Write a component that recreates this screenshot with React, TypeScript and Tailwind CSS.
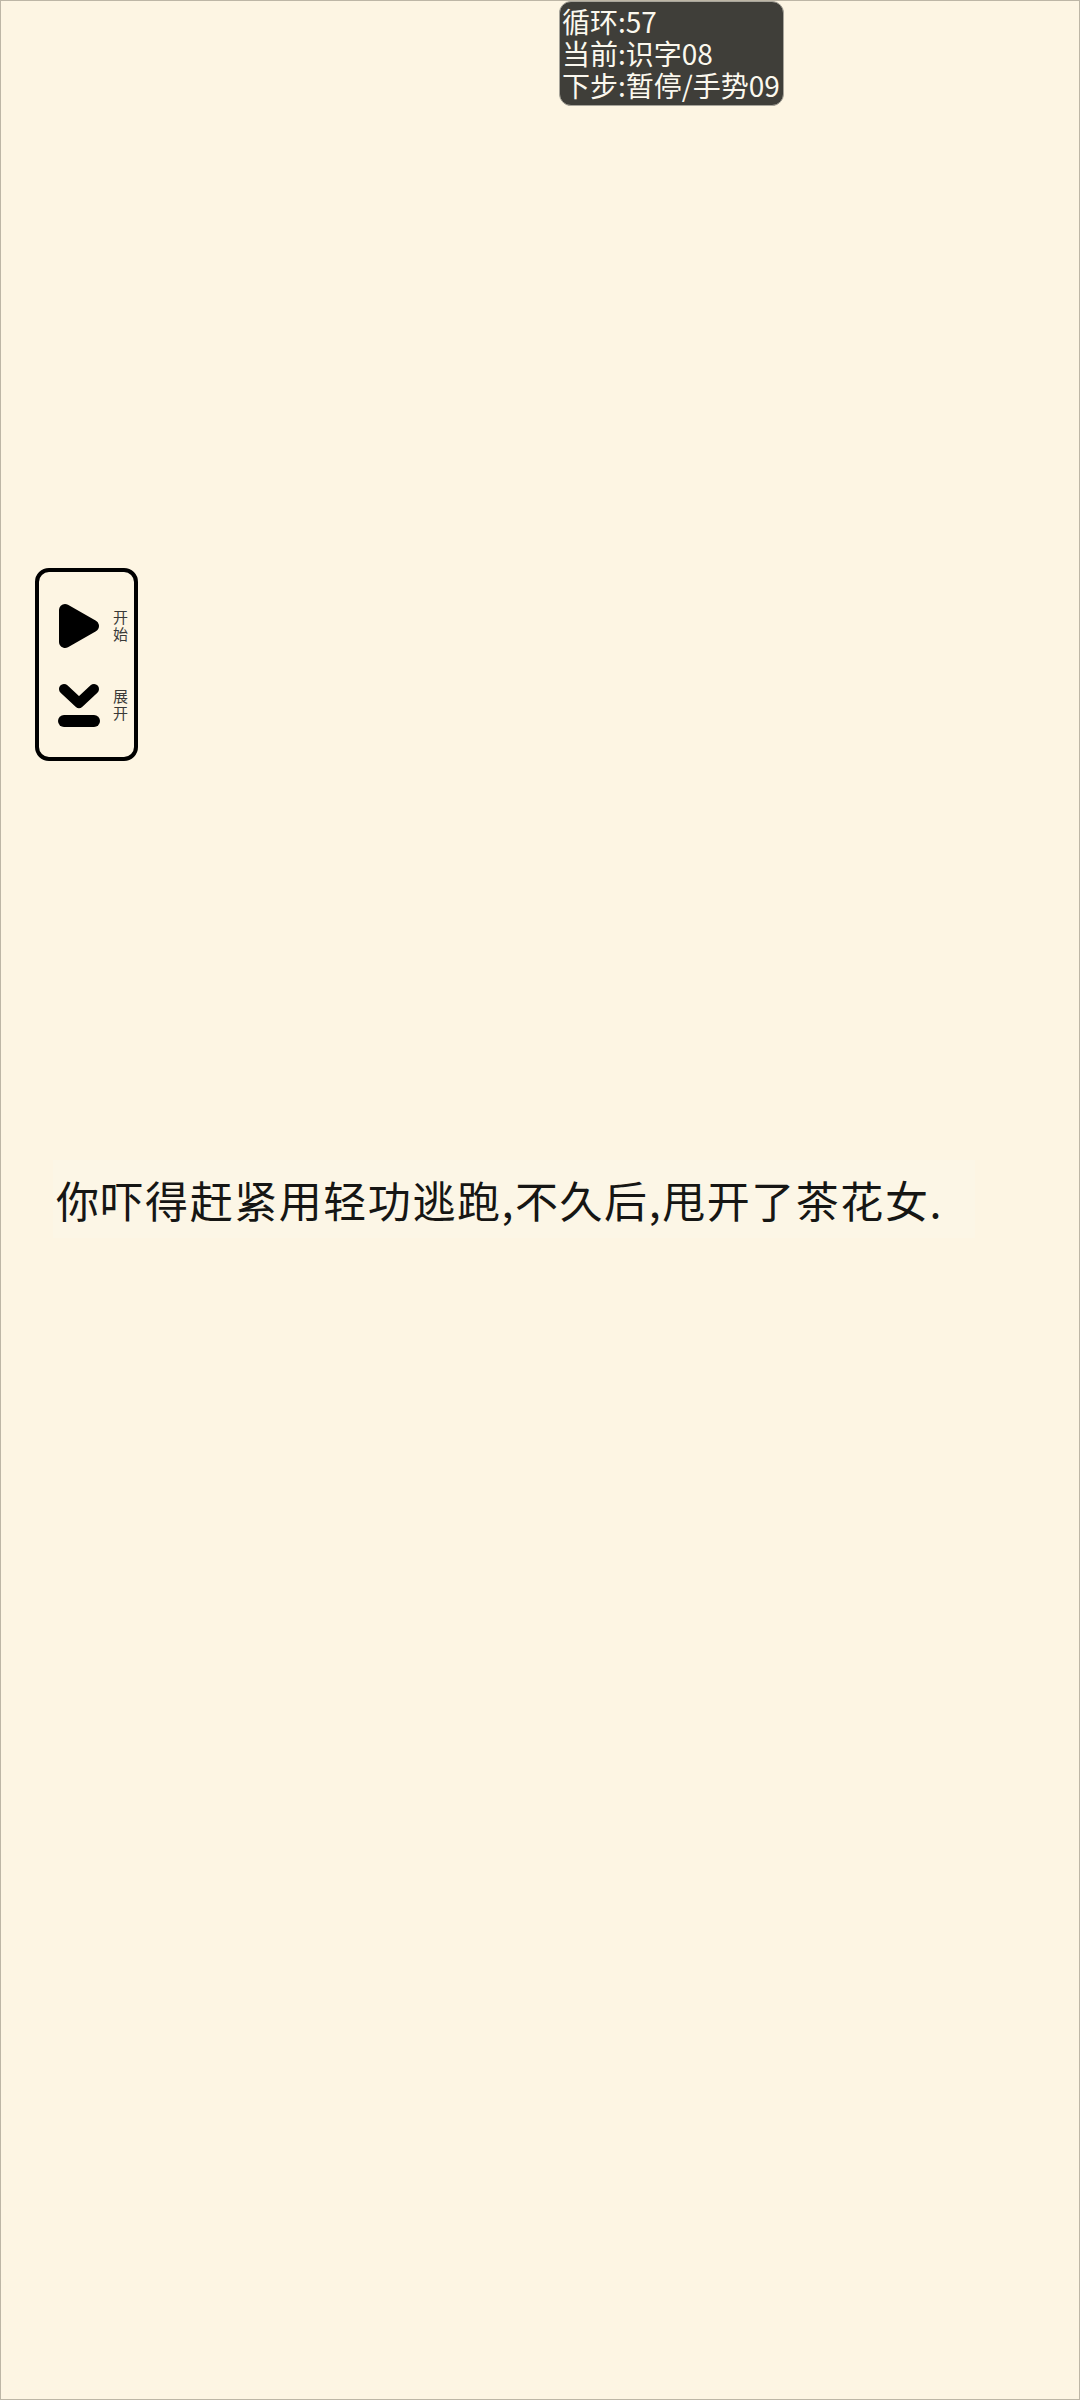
const cjk = "font-['Noto_Sans_CJK_SC','Noto_Sans',sans-serif]"

function StatusBox() {
    return (
        <div className={`absolute left-[558px] top-[0px] w-[225px] h-[105px] rounded-[12px] border border-[#a8a59b] bg-[#3f3e39] pl-[2px] pt-[3px] text-[28px] leading-[32px] text-[#fbf8ee] whitespace-nowrap ${cjk}`}>
            <div>循环:57</div>
            <div>当前:识字08</div>
            <div>下步:暂停/手势09</div>
        </div>
    )
}

function SideWidget() {
    return (
        <div className={`absolute left-[34px] top-[567px] w-[103px] h-[193px] rounded-[14px] border-[4px] border-black flex flex-col gap-[32px] pl-[19px] pt-[30px] ${cjk}`}>
            <div className="flex items-center gap-[13px] h-[48px]">
                <svg width="42" height="46" viewBox="0 0 42 46">
                    <path d="M7 7 L35 23 L7 39 Z" fill="black" stroke="black" strokeWidth="12" strokeLinejoin="round" />
                </svg>
                <div className="w-[16px] -mt-[2px] text-[15px] leading-[17px] text-[#3a3a38]">开始</div>
            </div>
            <div className="flex items-center gap-[13px] h-[48px]">
                <svg width="42" height="46" viewBox="0 0 42 46">
                    <path d="M6 6 L21 20 L36 6" fill="none" stroke="black" strokeWidth="10" strokeLinecap="round" strokeLinejoin="round" />
                    <path d="M6 38 H36" fill="none" stroke="black" strokeWidth="12" strokeLinecap="round" />
                </svg>
                <div className="w-[16px] -mt-[4px] text-[15px] leading-[17px] text-[#3a3a38]">展开</div>
            </div>
        </div>
    )
}

export default function App() {
    return (
        <div className="relative w-[1080px] h-[2400px] overflow-hidden bg-[#fdf5e3] border border-[#bdb6a6] pt-[1159px]">
            <StatusBox />
            <SideWidget />
            <div className={`ml-[52px] mr-[104px] h-[78px] bg-[#fcf6e6] pl-[3px] text-[43px] tracking-[1.55px] leading-[78px] text-[#161614] whitespace-nowrap ${cjk}`}>
                你吓得赶紧用轻功逃跑,不久后,甩开了茶花女.
            </div>
        </div>
    )
}
